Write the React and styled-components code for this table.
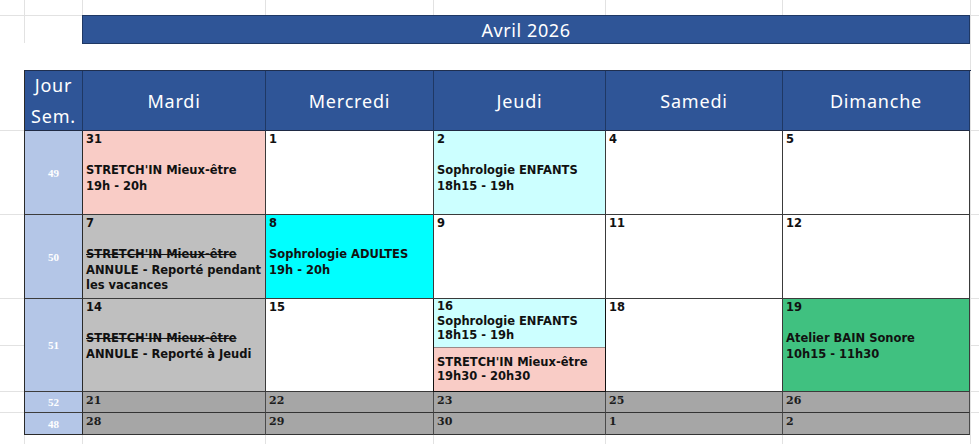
import React from 'react';
import styled, { createGlobalStyle } from 'styled-components';

const GRID = '#e2e2e2';

const GlobalStyle = createGlobalStyle`
  html, body {
    margin: 0;
    padding: 0;
    background: #fff;
  }
  body {
    font-family: "DejaVu Sans", Verdana, sans-serif;
  }
`;

// faint excel gridlines behind the sheet
const line = (x, y, w, h) =>
  `linear-gradient(${GRID}, ${GRID}) ${x} ${y} / ${w} ${h} no-repeat`;

const Sheet = styled.div`
  width: 979px;
  height: 444px;
  box-sizing: border-box;
  padding: 15px 0 0 24px;
  overflow: hidden;
  background: ${[
    line('0', '15px', '100%', '1px'),
    line('0', '130px', '100%', '1px'),
    line('0', '214px', '100%', '1px'),
    line('0', '298px', '100%', '1px'),
    line('0', '345px', '100%', '1px'),
    line('0', '391px', '100%', '1px'),
    line('0', '412px', '100%', '1px'),
    line('24px', '0', '1px', '43px'),
    line('82px', '0', '1px', '43px'),
    line('265px', '0', '1px', '15px'),
    line('433px', '0', '1px', '15px'),
    line('605px', '0', '1px', '15px'),
    line('782px', '0', '1px', '15px'),
    line('970px', '0', '1px', '100%'),
    line('24px', '435px', '1px', '10px'),
    line('82px', '435px', '1px', '10px'),
    line('265px', '435px', '1px', '10px'),
    line('433px', '435px', '1px', '10px'),
    line('605px', '435px', '1px', '10px'),
    line('782px', '435px', '1px', '10px'),
  ].join(', ')};
`;

const TitleBar = styled.div`
  margin-left: 58px;
  width: 888px;
  height: 29px;
  box-sizing: border-box;
  background: #2f5597;
  border: 1px solid #1f3864;
  color: #fff;
  font-family: "Noto Sans", "Noto Sans CJK JP", sans-serif;
  font-size: 18px;
  letter-spacing: 0.6px;
  display: flex;
  align-items: center;
  justify-content: center;
`;

const Table = styled.div`
  margin-top: 26px;
  display: grid;
  grid-template-columns: 58px 183px 168px 172px 177px 187px;
  grid-template-rows: 60px 84px 84px 93px 21px 22px;
  width: 946px;
  border-top: 1px solid #1f2f4f;
  border-left: 1px solid #2a2a2a;
`;

const HeadCell = styled.div`
  box-sizing: border-box;
  background: #2f5597;
  border-right: 1px solid #1f3864;
  border-bottom: 1px solid #1f2a44;
  color: #fff;
  font-family: "Noto Sans", "Noto Sans CJK JP", sans-serif;
  font-size: 18px;
  letter-spacing: 0.8px;
  line-height: ${(p) => (p.$stack ? '31px' : '20px')};
  display: flex;
  align-items: center;
  justify-content: center;
  text-align: center;
`;

const WeekCell = styled.div`
  box-sizing: border-box;
  background: #b4c6e7;
  border-right: 1px solid #2a2a2a;
  border-bottom: 1px solid ${(p) => (p.$last ? '#2a2a2a' : '#3c3c3c')};
  color: #fff;
  font-family: "Liberation Serif", "DejaVu Serif", serif;
  font-weight: bold;
  font-size: 11px;
  display: flex;
  align-items: center;
  justify-content: center;
`;

const Cell = styled.div`
  box-sizing: border-box;
  background: ${(p) => p.$bg || '#fff'};
  border-right: 1px solid #3a3a3a;
  border-bottom: 1px solid #3a3a3a;
  padding: 1px 3px 0;
  font-size: 11.5px;
  font-weight: bold;
  line-height: 15.5px;
  color: #111;
  white-space: nowrap;
`;

const Num = styled.div`
  margin-bottom: 15.5px;
`;

const Gone = styled.div`
  text-decoration: line-through;
`;

const SplitCell = styled.div`
  box-sizing: border-box;
  display: flex;
  flex-direction: column;
  border: 1px solid #111;
  border-top: none;
  margin-left: -1px;
  font-size: 11.5px;
  font-weight: bold;
  color: #111;
  white-space: nowrap;
`;

const Part = styled.div`
  flex: ${(p) => p.$h};
  background: ${(p) => p.$bg};
  padding: 0 3px;
  line-height: 14.5px;
  display: flex;
  flex-direction: column;
  justify-content: ${(p) => (p.$center ? 'center' : 'flex-start')};
  border-top: ${(p) => (p.$sep ? '1px solid #9a8a88' : 'none')};
`;

const DarkCell = styled.div`
  box-sizing: border-box;
  background: #a6a6a6;
  border-right: 1px solid #4a4a4a;
  border-bottom: 1px solid #333;
  padding: 1px 3px 0;
  font-family: "DejaVu Serif", "Liberation Serif", serif;
  font-weight: bold;
  font-size: 11px;
  line-height: 15px;
  color: #1c1c1c;
`;

const days = ['Mardi', 'Mercredi', 'Jeudi', 'Samedi', 'Dimanche'];

const Day = ({ n, bg, lines = [], gone = [] }) => (
  <Cell $bg={bg}>
    <Num>{n}</Num>
    {gone.map((t) => (
      <Gone key={t}>{t}</Gone>
    ))}
    {lines.map((t) => (
      <div key={t}>{t}</div>
    ))}
  </Cell>
);

export default function App() {
  return (
    <>
      <GlobalStyle />
      <Sheet>
        <TitleBar>Avril 2026</TitleBar>
        <Table>
          <HeadCell $stack>
            Jour
            <br />
            Sem.
          </HeadCell>
          {days.map((d) => (
            <HeadCell key={d}>{d}</HeadCell>
          ))}

          <WeekCell>49</WeekCell>
          <Day n="31" bg="#f9ccc6" lines={["STRETCH'IN Mieux-être", '19h - 20h']} />
          <Day n="1" />
          <Day n="2" bg="#ccffff" lines={['Sophrologie ENFANTS', '18h15 - 19h']} />
          <Day n="4" />
          <Day n="5" />

          <WeekCell>50</WeekCell>
          <Day
            n="7"
            bg="#bfbfbf"
            gone={["STRETCH'IN Mieux-être"]}
            lines={['ANNULE - Reporté pendant', 'les vacances']}
          />
          <Day n="8" bg="#00ffff" lines={['Sophrologie ADULTES', '19h - 20h']} />
          <Day n="9" />
          <Day n="11" />
          <Day n="12" />

          <WeekCell>51</WeekCell>
          <Day
            n="14"
            bg="#bfbfbf"
            gone={["STRETCH'IN Mieux-être"]}
            lines={['ANNULE - Reporté à Jeudi']}
          />
          <Day n="15" />
          <SplitCell>
            <Part $h="49" $bg="#ccffff">
              <div>16</div>
              <div>Sophrologie ENFANTS</div>
              <div>18h15 - 19h</div>
            </Part>
            <Part $h="44" $bg="#f9ccc6" $center $sep>
              <div>STRETCH'IN Mieux-être</div>
              <div>19h30 - 20h30</div>
            </Part>
          </SplitCell>
          <Day n="18" />
          <Day n="19" bg="#40c180" lines={['Atelier BAIN Sonore', '10h15 - 11h30']} />

          <WeekCell>52</WeekCell>
          {['21', '22', '23', '25', '26'].map((n) => (
            <DarkCell key={n}>{n}</DarkCell>
          ))}

          <WeekCell $last>48</WeekCell>
          {['28', '29', '30', '1', '2'].map((n) => (
            <DarkCell key={n}>{n}</DarkCell>
          ))}
        </Table>
      </Sheet>
    </>
  );
}
